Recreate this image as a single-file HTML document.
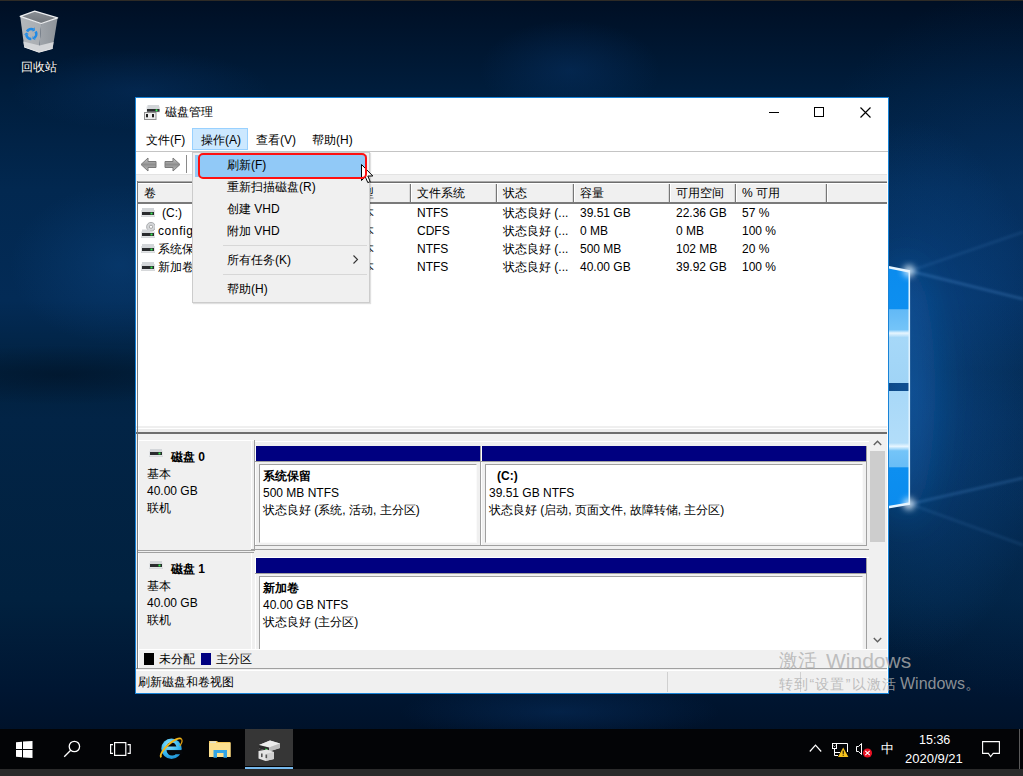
<!DOCTYPE html>
<html><head><meta charset="utf-8">
<style>
*{box-sizing:border-box;margin:0;padding:0}
html,body{width:1023px;height:776px;overflow:hidden}
body{position:relative;font-family:"Liberation Sans",sans-serif;font-size:12px;color:#000;
background:#03132b}
.a{position:absolute}
.t{position:absolute;white-space:nowrap;line-height:14px}
#bg{left:0;top:0;width:1023px;height:776px;
background:
 radial-gradient(ellipse 140px 270px at 912px 390px, rgba(16,95,180,0.45), rgba(16,95,180,0) 100%),
 radial-gradient(ellipse 220px 260px at 1010px 250px, rgba(10,62,124,0.40), rgba(10,62,124,0) 100%),
 radial-gradient(ellipse 200px 200px at 1023px 500px, rgba(10,62,124,0.30), rgba(10,62,124,0) 100%),
 radial-gradient(ellipse 110px 80px at 120px 265px, rgba(12,70,130,0.45), rgba(12,70,130,0) 100%),
 radial-gradient(ellipse 160px 30px at 60px 375px, rgba(0,8,20,0.35), rgba(0,8,20,0) 100%),
 radial-gradient(ellipse 90px 50px at 570px 70px, rgba(10,60,120,0.35), rgba(10,60,120,0) 100%),
 radial-gradient(ellipse 160px 30px at 560px 712px, rgba(10,60,120,0.35), rgba(10,60,120,0) 100%),
 radial-gradient(ellipse 130px 40px at 140px 90px, rgba(10,60,120,0.3), rgba(10,60,120,0) 100%),
 linear-gradient(180deg,#000f24 0px,#001d3c 90px,#022850 190px,#032b56 300px,#01213f 372px,#022446 420px,#01213f 600px,#001632 690px,#00122a 729px);}
#win{left:135px;top:97px;width:754px;height:597px;background:#fff;border:1px solid #1883d7}
</style></head><body>
<div id="bg" class="a"></div>
<div class="a" style="left:0;top:0;width:1023px;height:1px;background:#2e2b26"></div>

<!-- windows logo panes -->
<svg class="a" style="left:760px;top:200px" width="263" height="360" viewBox="760 200 263 360">
 <defs>
  <filter id="blr" x="-50%" y="-50%" width="200%" height="200%"><feGaussianBlur stdDeviation="3"/></filter>
  <filter id="blr3" x="-100%" y="-50%" width="300%" height="200%"><feGaussianBlur stdDeviation="18"/></filter>
  <filter id="blr2" x="-50%" y="-50%" width="200%" height="200%"><feGaussianBlur stdDeviation="1.2"/></filter>
  <linearGradient id="pu" gradientUnits="userSpaceOnUse" x1="0" y1="272" x2="0" y2="383">
   <stop offset="0" stop-color="#0b8cee"/><stop offset="0.33" stop-color="#0d8ff0"/>
   <stop offset="0.34" stop-color="#62b9f6"/><stop offset="0.52" stop-color="#74c4f8"/>
   <stop offset="0.55" stop-color="#e8f6ff"/><stop offset="0.59" stop-color="#a6d8f8"/><stop offset="1" stop-color="#a0d4f6"/>
  </linearGradient>
  <linearGradient id="pl" gradientUnits="userSpaceOnUse" x1="0" y1="391" x2="0" y2="504">
   <stop offset="0" stop-color="#a8d8f8"/><stop offset="0.46" stop-color="#b2ddf9"/>
   <stop offset="0.49" stop-color="#e8f6ff"/><stop offset="0.53" stop-color="#74c4f8"/><stop offset="0.67" stop-color="#68bdf6"/>
   <stop offset="0.68" stop-color="#0d8ff0"/><stop offset="1" stop-color="#0b8cee"/>
  </linearGradient>
 </defs>
 <ellipse cx="905" cy="390" rx="30" ry="130" fill="rgba(30,120,210,0.30)" filter="url(#blr3)"/>
 <path d="M910 271L1023 299" stroke="rgba(110,180,250,0.2)" stroke-width="3" filter="url(#blr2)"/>
 <path d="M910 271L1023 232" stroke="rgba(110,180,250,0.1)" stroke-width="3" filter="url(#blr2)"/>
 <path d="M910 504L1023 478" stroke="rgba(110,180,250,0.18)" stroke-width="3" filter="url(#blr2)"/>
 <path d="M910 504L1023 545" stroke="rgba(110,180,250,0.1)" stroke-width="3" filter="url(#blr2)"/>
 <path d="M760 246L910 271.5V383H760Z" fill="url(#pu)"/>
 <path d="M760 391H910V503.5L760 529Z" fill="url(#pl)"/>
 <path d="M840 257.5L910 271.5" stroke="#e6f5ff" stroke-width="2.5"/>
 <path d="M840 515.5L910 503.5" stroke="#e6f5ff" stroke-width="2.5"/>
 <path d="M909.3 271V504" stroke="#dff2ff" stroke-width="1.6"/>
 <circle cx="909" cy="271" r="6" fill="rgba(230,245,255,0.8)" filter="url(#blr)"/>
 <circle cx="909" cy="504" r="6" fill="rgba(230,245,255,0.8)" filter="url(#blr)"/>
</svg>
<!-- recycle bin -->
<svg class="a" style="left:18px;top:9px" width="42" height="46" viewBox="18 9 42 46">
 <defs>
  <linearGradient id="bl" x1="0" y1="0" x2="1" y2="0"><stop offset="0" stop-color="#b3b7bb"/><stop offset="1" stop-color="#a9adb2"/></linearGradient>
  <linearGradient id="br" x1="0" y1="0" x2="1" y2="0"><stop offset="0" stop-color="#a0a5ab"/><stop offset="1" stop-color="#8d9399"/></linearGradient>
  <linearGradient id="bt" x1="0" y1="0" x2="0" y2="1"><stop offset="0" stop-color="#8a8f95"/><stop offset="1" stop-color="#70757b"/></linearGradient>
 </defs>
 <path d="M20.2 16.3L41.2 23.5L39 52.2L24.2 47Z" fill="url(#bl)"/>
 <path d="M41.2 23.5L57.6 17.9L52.6 48.5L39 52.2Z" fill="url(#br)"/>
 <path d="M23.3 41.5L39.6 45.5L53.6 42L52.6 48.5L39 52.2L24.2 47Z" fill="#d3d5d8"/>
 <path d="M24.2 47L39 52.2L52.6 48.5" fill="none" stroke="#e6e7e9" stroke-width="1"/>
 <path d="M20.2 16.3L34.7 11.1L57.6 17.9L41.2 23.5Z" fill="url(#bt)" stroke="#eceef0" stroke-width="1.3" stroke-linejoin="round"/>
 <path d="M26.97 31.50A5.0 5.0 0 0 1 33.41 29.47" stroke="#1f8ae6" stroke-width="2.6" fill="none"/><path d="M34.51 27.11L34.96 30.59L32.31 31.82Z" fill="#1f8ae6"/><path d="M35.63 31.50A5.0 5.0 0 0 1 34.17 38.10" stroke="#1f8ae6" stroke-width="2.6" fill="none"/><path d="M35.66 40.23L32.42 38.87L32.68 35.97Z" fill="#1f8ae6"/><path d="M31.30 39.00A5.0 5.0 0 0 1 26.32 34.44" stroke="#1f8ae6" stroke-width="2.6" fill="none"/><path d="M23.73 34.66L26.52 32.54L28.91 34.21Z" fill="#1f8ae6"/>
</svg>
<div class="t" style="left:21px;top:60px;color:#fff;font-size:12px;text-shadow:0 0 2px #000">回收站</div>

<!-- window -->

<div id="win" class="a"></div>
<!-- title bar -->
<svg class="a" style="left:144px;top:104px" width="17" height="17" viewBox="144 104 17 17">
 <rect x="146.5" y="106.5" width="13.5" height="6" fill="#e2e4e6"/>
 <rect x="147.5" y="105" width="11.5" height="4" fill="#d2d5d8"/>
 <rect x="147" y="109" width="12.5" height="2.7" fill="#2a2c2e"/>
 <circle cx="156.5" cy="110.3" r="1.1" fill="#3df35a"/>
 <rect x="144.5" y="112.5" width="11.5" height="7" fill="#ececec" stroke="#8f8f8f" stroke-width="1"/>
 <rect x="146" y="114" width="2" height="3.3" fill="#1e1e1e"/>
 <rect x="152" y="114" width="2" height="3.3" fill="#1e1e1e"/>
</svg>
<div class="t" style="left:165px;top:105px">磁盘管理</div>
<div class="a" style="left:769px;top:112px;width:10px;height:1px;background:#000"></div>
<div class="a" style="left:814px;top:107px;width:10px;height:10px;border:1px solid #000"></div>
<svg class="a" style="left:860px;top:107px" width="11" height="11" viewBox="0 0 11 11"><path d="M0.5 0.5L10.5 10.5M10.5 0.5L0.5 10.5" stroke="#000" stroke-width="1.15"/></svg>
<!-- menu bar -->
<div class="t" style="left:146px;top:133px">文件(F)</div>
<div class="a" style="left:192px;top:128px;width:56px;height:22px;background:#cce8ff;border:1px solid #99d1ff"></div>
<div class="t" style="left:201px;top:133px">操作(A)</div>
<div class="t" style="left:256px;top:133px">查看(V)</div>
<div class="t" style="left:312px;top:133px">帮助(H)</div>
<div class="a" style="left:136px;top:151px;width:752px;height:1px;background:#c4c4c4"></div>
<!-- toolbar -->
<svg class="a" style="left:140px;top:157px" width="42" height="15" viewBox="0 0 42 15">
 <defs><linearGradient id="ag" x1="0" y1="0" x2="0" y2="1"><stop offset="0" stop-color="#d0d0d0"/><stop offset="0.5" stop-color="#8e8e8e"/><stop offset="1" stop-color="#c4c4c4"/></linearGradient></defs>
 <path d="M1 7.5L8 1V4.5H16V10.5H8V14Z" fill="url(#ag)" stroke="#7a7a7a" stroke-width="1" stroke-linejoin="round"/>
 <path d="M40 7.5L33 1V4.5H25V10.5H33V14Z" fill="url(#ag)" stroke="#7a7a7a" stroke-width="1" stroke-linejoin="round"/>
</svg>
<div class="a" style="left:186px;top:155px;width:1px;height:18px;background:#8a8a8a"></div>
<div class="a" style="left:136px;top:174px;width:751px;height:8px;background:#f0f0f0"></div>
<div class="a" style="left:136px;top:174px;width:751px;height:1px;background:#e3e3e3"></div>
<!-- list -->
<div class="a" style="left:137px;top:181px;width:750px;height:1px;background:#a8a8a8"></div>
<div class="a" style="left:137px;top:182px;width:750px;height:1px;background:#6d6d6d"></div>
<div class="a" style="left:137px;top:183px;width:750px;height:19px;background:#f0f0f0;border-top:1px solid #fff;border-left:1px solid #fff"></div>
<div class="a" style="left:138px;top:202px;width:749px;height:2px;background:#7a7a7a"></div>
<div class="a" style="left:409px;top:184px;width:3px;height:18px;border-left:1px solid #d8d8d8;border-right:1px solid #fff;background:#777"></div>
<div class="a" style="left:495px;top:184px;width:3px;height:18px;border-left:1px solid #d8d8d8;border-right:1px solid #fff;background:#777"></div>
<div class="a" style="left:572px;top:184px;width:3px;height:18px;border-left:1px solid #d8d8d8;border-right:1px solid #fff;background:#777"></div>
<div class="a" style="left:668px;top:184px;width:3px;height:18px;border-left:1px solid #d8d8d8;border-right:1px solid #fff;background:#777"></div>
<div class="a" style="left:734px;top:184px;width:3px;height:18px;border-left:1px solid #d8d8d8;border-right:1px solid #fff;background:#777"></div>
<div class="a" style="left:825px;top:184px;width:3px;height:18px;border-left:1px solid #d8d8d8;border-right:1px solid #fff;background:#777"></div>
<div class="t" style="left:144px;top:186px">卷</div>
<div class="t" style="left:350px;top:186px">类型</div>
<div class="t" style="left:417px;top:186px">文件系统</div>
<div class="t" style="left:503px;top:186px">状态</div>
<div class="t" style="left:580px;top:186px">容量</div>
<div class="t" style="left:676px;top:186px">可用空间</div>
<div class="t" style="left:742px;top:186px">% 可用</div>
<!-- rows -->
<svg class="a" style="left:141px;top:208px" width="14" height="9" viewBox="0 0 14 9"><rect x="0" y="2" width="14" height="7" fill="#e2e4e6"/><rect x="1" y="0" width="12" height="4" fill="#d3d6d9"/><rect x="1" y="4" width="12" height="3" fill="#2a2c2e"/><rect x="9.5" y="4.6" width="2" height="1.8" fill="#35f050"/><rect x="0" y="8" width="14" height="1" fill="#d6d8da"/></svg><div class="t" style="left:162px;top:206px">(C:)</div><div class="t" style="left:350px;top:206px">基本</div><div class="t" style="left:417px;top:206px">NTFS</div><div class="t" style="left:503px;top:206px">状态良好 (...</div><div class="t" style="left:580px;top:206px">39.51 GB</div><div class="t" style="left:676px;top:206px">22.36 GB</div><div class="t" style="left:742px;top:206px">57 %</div>
<svg class="a" style="left:141px;top:221px" width="14" height="17" viewBox="0 0 14 17"><circle cx="10" cy="5.8" r="4.4" fill="#d4d6d8" stroke="#a4a6a8" stroke-width="0.9"/><circle cx="10" cy="5.8" r="1.6" fill="#fff" stroke="#8e8e8e" stroke-width="0.7"/><rect x="0" y="10.5" width="14" height="6.5" fill="#e2e4e6"/><rect x="1" y="8.5" width="8" height="3.5" fill="#d3d6d9"/><rect x="1" y="12" width="12" height="3" fill="#2a2c2e"/><rect x="9.5" y="12.6" width="2" height="1.8" fill="#35f050"/><rect x="0" y="16" width="14" height="1" fill="#d6d8da"/></svg><div class="t" style="left:158px;top:224px;letter-spacing:0.6px">config</div><div class="t" style="left:350px;top:224px">基本</div><div class="t" style="left:417px;top:224px">CDFS</div><div class="t" style="left:503px;top:224px">状态良好 (...</div><div class="t" style="left:580px;top:224px">0 MB</div><div class="t" style="left:676px;top:224px">0 MB</div><div class="t" style="left:742px;top:224px">100 %</div>
<svg class="a" style="left:141px;top:244px" width="14" height="9" viewBox="0 0 14 9"><rect x="0" y="2" width="14" height="7" fill="#e2e4e6"/><rect x="1" y="0" width="12" height="4" fill="#d3d6d9"/><rect x="1" y="4" width="12" height="3" fill="#2a2c2e"/><rect x="9.5" y="4.6" width="2" height="1.8" fill="#35f050"/><rect x="0" y="8" width="14" height="1" fill="#d6d8da"/></svg><div class="t" style="left:158px;top:242px">系统保留</div><div class="t" style="left:350px;top:242px">基本</div><div class="t" style="left:417px;top:242px">NTFS</div><div class="t" style="left:503px;top:242px">状态良好 (...</div><div class="t" style="left:580px;top:242px">500 MB</div><div class="t" style="left:676px;top:242px">102 MB</div><div class="t" style="left:742px;top:242px">20 %</div>
<svg class="a" style="left:141px;top:262px" width="14" height="9" viewBox="0 0 14 9"><rect x="0" y="2" width="14" height="7" fill="#e2e4e6"/><rect x="1" y="0" width="12" height="4" fill="#d3d6d9"/><rect x="1" y="4" width="12" height="3" fill="#2a2c2e"/><rect x="9.5" y="4.6" width="2" height="1.8" fill="#35f050"/><rect x="0" y="8" width="14" height="1" fill="#d6d8da"/></svg><div class="t" style="left:158px;top:260px">新加卷</div><div class="t" style="left:350px;top:260px">基本</div><div class="t" style="left:417px;top:260px">NTFS</div><div class="t" style="left:503px;top:260px">状态良好 (...</div><div class="t" style="left:580px;top:260px">40.00 GB</div><div class="t" style="left:676px;top:260px">39.92 GB</div><div class="t" style="left:742px;top:260px">100 %</div>



<div class="a" style="left:136px;top:426px;width:751px;height:2px;background:#efefef;"></div>
<div class="a" style="left:136px;top:428px;width:751px;height:1px;background:#ffffff;"></div>
<div class="a" style="left:136px;top:429px;width:751px;height:3px;background:#ebebeb;"></div>
<div class="a" style="left:136px;top:432px;width:751px;height:2px;background:#6d6d6d;"></div>
<div class="a" style="left:136px;top:434px;width:734px;height:215px;background:#f0f0f0;"></div>

<div class="a" style="left:870px;top:434px;width:17px;height:215px;background:#f0f0f0;"></div>
<div class="a" style="left:870px;top:451px;width:15px;height:91px;background:#cdcdcd;"></div>
<svg class="a" style="left:873px;top:440px" width="9" height="6" viewBox="0 0 9 6"><path d="M0.8 5L4.5 1.2L8.2 5" stroke="#606060" stroke-width="1.4" fill="none"/></svg>
<svg class="a" style="left:873px;top:637px" width="9" height="6" viewBox="0 0 9 6"><path d="M0.8 1L4.5 4.8L8.2 1" stroke="#606060" stroke-width="1.4" fill="none"/></svg>
<div class="a" style="left:137px;top:440px;width:117px;height:1px;background:#ffffff;"></div>
<div class="a" style="left:254px;top:440px;width:1px;height:110px;background:#a0a0a0;"></div>
<div class="a" style="left:137px;top:550px;width:118px;height:1px;background:#a0a0a0;"></div>
<div class="a" style="left:138px;top:441px;width:1px;height:108px;background:#ffffff;"></div>
<div class="a" style="left:251px;top:441px;width:1px;height:108px;background:#ffffff;"></div>
<svg class="a" style="left:149px;top:449px" width="14" height="8" viewBox="0 0 14 8"><rect x="0" y="2" width="14" height="6" fill="#e2e4e6"/><rect x="1" y="0" width="12" height="3" fill="#d3d6d9"/><rect x="1" y="3" width="12" height="3" fill="#2a2c2e"/><rect x="9.5" y="3.6" width="2" height="1.8" fill="#35f050"/><rect x="0" y="7" width="14" height="1" fill="#d6d8da"/></svg>
<div class="t" style="left:171px;top:450px;font-weight:bold">磁盘 0</div>
<div class="t" style="left:147px;top:467px">基本</div>
<div class="t" style="left:147px;top:484px">40.00 GB</div>
<div class="t" style="left:147px;top:501px">联机</div>
<div class="a" style="left:255px;top:441px;width:614px;height:1px;background:#ffffff;"></div>
<div class="a" style="left:255px;top:446px;width:1px;height:100px;background:#ffffff;"></div>
<div class="a" style="left:256px;top:446px;width:224px;height:15px;background:#000080;"></div>
<div class="a" style="left:255px;top:461px;width:225px;height:1px;background:#a0a0a0;"></div>
<div class="a" style="left:259px;top:464px;width:218px;height:79px;background:#ffffff;border-top:1px solid #a0a0a0;border-left:1px solid #a0a0a0;border-right:1px solid #fafafa;border-bottom:1px solid #fafafa"></div>
<div class="a" style="left:480px;top:446px;width:1px;height:100px;background:#a0a0a0;"></div>
<div class="a" style="left:481px;top:446px;width:1px;height:100px;background:#ffffff;"></div>
<div class="a" style="left:482px;top:446px;width:384px;height:15px;background:#000080;"></div>
<div class="a" style="left:481px;top:461px;width:385px;height:1px;background:#a0a0a0;"></div>
<div class="a" style="left:485px;top:464px;width:378px;height:79px;background:#ffffff;border-top:1px solid #a0a0a0;border-left:1px solid #a0a0a0;border-right:1px solid #fafafa;border-bottom:1px solid #fafafa"></div>
<div class="a" style="left:866px;top:446px;width:1px;height:100px;background:#a0a0a0;"></div>
<div class="a" style="left:255px;top:545px;width:612px;height:1px;background:#a0a0a0;"></div>
<div class="a" style="left:251px;top:549px;width:618px;height:1px;background:#a0a0a0;"></div>
<div class="a" style="left:137px;top:552px;width:117px;height:1px;background:#a0a0a0;"></div>
<div class="a" style="left:138px;top:553px;width:1px;height:96px;background:#ffffff;"></div>
<div class="a" style="left:251px;top:553px;width:1px;height:96px;background:#ffffff;"></div>
<svg class="a" style="left:149px;top:561px" width="14" height="8" viewBox="0 0 14 8"><rect x="0" y="2" width="14" height="6" fill="#e2e4e6"/><rect x="1" y="0" width="12" height="3" fill="#d3d6d9"/><rect x="1" y="3" width="12" height="3" fill="#2a2c2e"/><rect x="9.5" y="3.6" width="2" height="1.8" fill="#35f050"/><rect x="0" y="7" width="14" height="1" fill="#d6d8da"/></svg>
<div class="t" style="left:171px;top:562px;font-weight:bold">磁盘 1</div>
<div class="t" style="left:147px;top:579px">基本</div>
<div class="t" style="left:147px;top:596px">40.00 GB</div>
<div class="t" style="left:147px;top:613px">联机</div>
<div class="a" style="left:255px;top:557px;width:614px;height:1px;background:#ffffff;"></div>
<div class="a" style="left:255px;top:558px;width:1px;height:100px;background:#ffffff;"></div>
<div class="a" style="left:256px;top:558px;width:610px;height:15px;background:#000080;"></div>
<div class="a" style="left:255px;top:573px;width:611px;height:1px;background:#a0a0a0;"></div>
<div class="a" style="left:259px;top:576px;width:604px;height:79px;background:#ffffff;border-top:1px solid #a0a0a0;border-left:1px solid #a0a0a0;border-right:1px solid #fafafa;border-bottom:1px solid #fafafa"></div>
<div class="a" style="left:866px;top:558px;width:1px;height:100px;background:#a0a0a0;"></div>
<div class="a" style="left:255px;top:657px;width:612px;height:1px;background:#a0a0a0;"></div>
<div class="a" style="left:251px;top:661px;width:618px;height:1px;background:#a0a0a0;"></div>
<div class="t" style="left:263px;top:469px;font-weight:bold">系统保留</div>
<div class="t" style="left:263px;top:486px">500 MB NTFS</div>
<div class="t" style="left:263px;top:503px">状态良好 (系统, 活动, 主分区)</div>
<div class="t" style="left:497px;top:469px;font-weight:bold">(C:)</div>
<div class="t" style="left:489px;top:486px">39.51 GB NTFS</div>
<div class="t" style="left:489px;top:503px">状态良好 (启动, 页面文件, 故障转储, 主分区)</div>
<div class="t" style="left:263px;top:581px;font-weight:bold">新加卷</div>
<div class="t" style="left:263px;top:598px">40.00 GB NTFS</div>
<div class="t" style="left:263px;top:615px">状态良好 (主分区)</div>
<div class="a" style="left:136px;top:649px;width:751px;height:19px;background:#f0f0f0;"></div>
<div class="a" style="left:144px;top:653px;width:10px;height:12px;background:#000000;"></div>
<div class="t" style="left:159px;top:652px">未分配</div>
<div class="a" style="left:201px;top:653px;width:10px;height:12px;background:#000080;"></div>
<div class="t" style="left:216px;top:652px">主分区</div>
<div class="a" style="left:136px;top:668px;width:751px;height:1px;background:#a0a0a0;"></div>
<div class="a" style="left:136px;top:669px;width:751px;height:24px;background:#f0f0f0;"></div>
<div class="a" style="left:136px;top:670px;width:751px;height:1px;background:#ffffff;"></div>
<div class="t" style="left:138px;top:675px">刷新磁盘和卷视图</div>
<div class="a" style="left:667px;top:672px;width:1px;height:20px;background:#d0d0d0;"></div>
<div class="a" style="left:800px;top:672px;width:1px;height:20px;background:#d0d0d0;"></div>

<div class="a" style="left:137px;top:181px;width:1px;height:488px;background:#7a7a7a"></div>
<div class="a" style="left:138px;top:649px;width:1px;height:19px;background:#fff"></div>
<div class="a" style="left:138px;top:649px;width:749px;height:1px;background:#fff"></div>
<!-- popup menu -->
<div class="a" style="left:192px;top:152px;width:178px;height:151px;background:#f0f0f0;border:1px solid #cccccc;box-shadow:1px 1px 1px rgba(0,0,0,0.12)"></div>
<div class="a" style="left:195px;top:155px;width:172px;height:22px;background:#91c9f7"></div>
<div class="t" style="left:227px;top:158px">刷新(F)</div>
<div class="t" style="left:227px;top:180px">重新扫描磁盘(R)</div>
<div class="t" style="left:227px;top:202px">创建 VHD</div>
<div class="t" style="left:227px;top:224px">附加 VHD</div>
<div class="a" style="left:223px;top:245px;width:144px;height:1px;background:#d7d7d7"></div>
<div class="t" style="left:227px;top:253px">所有任务(K)</div>
<svg class="a" style="left:352px;top:255px" width="7" height="9" viewBox="0 0 7 9"><path d="M1.5 0.5L5.5 4.5L1.5 8.5" stroke="#333" stroke-width="1.1" fill="none"/></svg>
<div class="a" style="left:223px;top:274px;width:144px;height:1px;background:#d7d7d7"></div>
<div class="t" style="left:227px;top:282px">帮助(H)</div>
<!-- cursor -->
<svg class="a" style="left:361px;top:164px" width="13" height="20" viewBox="0 0 13 20"><path d="M0.5 0.5V16.5L4.3 12.8L6.8 18.6L9.2 17.6L6.8 12H11.8Z" fill="#fff" stroke="#000" stroke-width="1" stroke-linejoin="miter"/></svg>
<div class="a" style="left:198px;top:153px;width:169px;height:26px;border:2px solid #ff1010;border-radius:5px"></div>


<!-- taskbar -->
<div class="a" style="left:0;top:729px;width:1023px;height:40px;background:#030406"></div>
<div class="a" style="left:0;top:769px;width:1023px;height:7px;background:#2a2a2a"></div>
<!-- taskbar icons -->
<svg class="a" style="left:16px;top:741px" width="17" height="17" viewBox="0 0 17 17" fill="#fff">
 <path d="M0 1.3L6 0.7V8H0Z M7 0.6L16.5 0V8H7Z M0 9H6V16.3L0 15.7Z M7 9H16.5V17L7 16.4Z"/>
</svg>
<svg class="a" style="left:63px;top:739px" width="19" height="19" viewBox="0 0 19 19" fill="none" stroke="#fff" stroke-width="1.3">
 <circle cx="11.4" cy="7.5" r="5.2"/><path d="M7.7 11.2L1.2 17.7"/>
</svg>
<svg class="a" style="left:110px;top:742px" width="21" height="14" viewBox="0 0 21 14" fill="none" stroke="#fff" stroke-width="1.2">
 <rect x="4.6" y="0.6" width="11.2" height="12.8"/><path d="M3 2.6H0.6V11.4H3 M17.6 2.6H20.2V11.4H17.6"/>
</svg>
<svg class="a" style="left:158px;top:735px" width="26" height="26" viewBox="0 0 26 26">
 <defs><radialGradient id="ieg" cx="0.4" cy="0.3" r="0.8"><stop offset="0" stop-color="#8fe3ff"/><stop offset="0.6" stop-color="#35b6ee"/><stop offset="1" stop-color="#1682c9"/></radialGradient></defs>
 <circle cx="13.5" cy="13.7" r="10.2" fill="url(#ieg)"/>
 <path d="M8.3 11.6C8.8 8.9 10.8 7.4 13.4 7.4C16 7.4 17.9 8.9 18.4 11.6Z" fill="#05070b"/>
 <path d="M8.4 15.2H24.5V19.2H17.6C16.7 20.2 15.2 20.6 13.7 20.6C11.3 20.6 9 18.6 8.4 15.2Z" fill="#05070b"/>
 <path d="M9 15.2H24V16.5H18.2L17.4 17.8C16.6 18.8 15.3 19.3 13.8 19.3C11.6 19.3 9.7 17.6 9 15.2Z" fill="#05070b"/>
 <path d="M3.2 22.3A13.4 4.4 -42 0 1 23.3 3.9" fill="none" stroke="#f2b71a" stroke-width="1.8"/><path d="M23.3 3.9C24.6 5.5 23.8 8.5 21.8 11" fill="none" stroke="#d99a10" stroke-width="1.3"/>
</svg>
<svg class="a" style="left:209px;top:740px" width="22" height="18" viewBox="0 0 22 18">
 <path d="M0 1H8L9 2H21.5V17H0Z" fill="#f6c75a"/>
 <path d="M0 3H21.5V17H0Z" fill="#fde08f"/>
 <rect x="1" y="1.5" width="6" height="1.2" fill="#dff2ff"/>
 <path d="M4.5 10H18V17.8H14.5V13H8V17.8H4.5Z" fill="#32a5e6"/>
</svg>
<div class="a" style="left:245px;top:729px;width:48px;height:37px;background:#363636"></div>
<div class="a" style="left:245px;top:767px;width:48px;height:2px;background:#76b9ed"></div>
<svg class="a" style="left:257px;top:739px" width="24" height="23" viewBox="0 0 24 23">
 <path d="M2 6L13 1.5L23 4.5V9L12 12.5L2 9.5Z" fill="#d6d6d6"/>
 <path d="M2 6L13 1.5L23 4.5L12 8.5Z" fill="#ececec"/>
 <path d="M12 8.5L23 4.5V9L12 12.5Z" fill="#bdbdbd"/>
 <path d="M2 6L12 8.5V12.5L2 9.5Z" fill="#2a2a2a"/>
 <path d="M8 9.4L10.3 10V11.3L8 10.7Z" fill="#23c43a"/>
 <path d="M1.5 12L10 10.5L17 13V20L8.5 22L1.5 19.5Z" fill="#e4e4e4"/>
 <path d="M10 14.5L17 13V20L8.5 22Z" fill="#cfcfcf"/>
 <rect x="4" y="14.5" width="1.6" height="3.6" fill="#555"/>
 <rect x="8.5" y="15.5" width="1.6" height="3.6" fill="#555"/>
</svg>
<!-- tray -->
<svg class="a" style="left:809px;top:744px" width="13" height="8" viewBox="0 0 13 8" fill="none" stroke="#fff" stroke-width="1.2"><path d="M0.8 7.5L6.5 1.2L12.2 7.5"/></svg>
<svg class="a" style="left:832px;top:743px" width="17" height="15" viewBox="0 0 17 15" fill="none" stroke="#fff" stroke-width="1">
 <path d="M4.5 0.5H15.5V9"/>
 <rect x="0.5" y="0.5" width="4" height="5"/>
 <path d="M1.6 2.6L2.5 3.6L3.4 2.6" stroke-width="0.8"/>
 <path d="M2.5 5.5V12.5H6 M2.5 9.5H8"/>
 <path d="M11.2 4.6L16.4 14H6Z" fill="#f7c31d" stroke="none"/>
 <rect x="10.7" y="7.6" width="1" height="3.3" fill="#000" stroke="none"/><rect x="10.7" y="11.7" width="1" height="1" fill="#000" stroke="none"/>
</svg>
<svg class="a" style="left:855px;top:742px" width="18" height="16" viewBox="0 0 18 16">
 <path d="M1.5 4.5H3.6L6.5 1.5V12.5L3.6 9.5H1.5Z" fill="none" stroke="#fff" stroke-width="1"/>
 <circle cx="12.5" cy="11" r="4.6" fill="#e81123"/>
 <path d="M10.3 8.8L14.7 13.2M14.7 8.8L10.3 13.2" stroke="#fff" stroke-width="1.1"/>
</svg>
<div class="t" style="left:881px;top:741px;color:#fff;font-size:13px;line-height:16px">中</div>
<div class="t" style="left:919px;top:732px;color:#fff;font-size:12.5px;line-height:16px">15:36</div>
<div class="t" style="left:905px;top:751px;color:#fff;font-size:13px;line-height:16px">2020/9/21</div>
<svg class="a" style="left:982px;top:741px" width="18" height="17" viewBox="0 0 18 17" fill="none" stroke="#fff" stroke-width="1.1">
 <path d="M0.6 0.6H17.4V12.4H11.2L8.6 15.6L6.4 12.4H0.6Z"/>
</svg>
<div class="a" style="left:1019px;top:729px;width:1px;height:40px;background:#5a5a5a"></div>
<!-- watermark -->
<div class="t" style="left:779px;top:650px;color:rgba(175,175,175,0.8);font-size:19px;line-height:22px">激活</div>
<div class="t" style="left:826px;top:649px;color:rgba(175,175,175,0.8);font-size:21px;line-height:24px">Windows</div>
<div class="t" style="left:779px;top:676px;color:rgba(175,175,175,0.8);font-size:14px;line-height:16px;letter-spacing:1.2px">转到“设置”以激活</div>
<div class="t" style="left:900px;top:675px;color:rgba(175,175,175,0.8);font-size:16px;line-height:18px">Windows。</div>
</body></html>
